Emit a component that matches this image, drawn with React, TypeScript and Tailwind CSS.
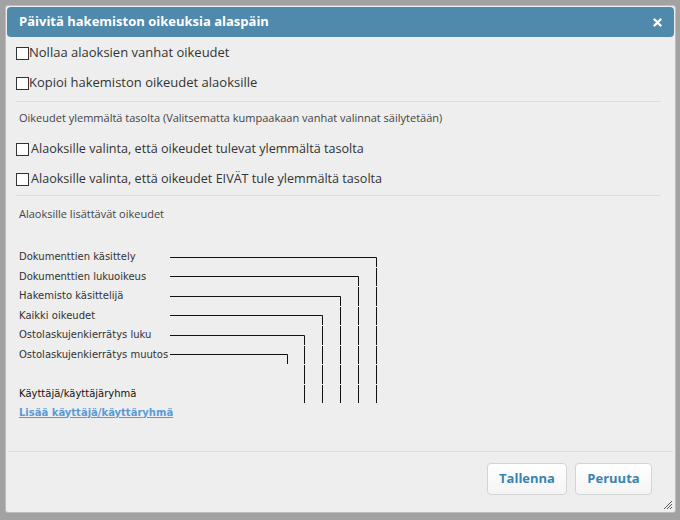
const rows = [
  "Dokumenttien käsittely",
  "Dokumenttien lukuoikeus",
  "Hakemisto käsittelijä",
  "Kaikki oikeudet",
  "Ostolaskujenkierrätys luku",
  "Ostolaskujenkierrätys muutos",
];

const ROW_H = 19.5;
const TOTAL_ROWS = 8;
// where each horizontal line turns down (relative to the svg's left edge)
const ends = [206, 188, 170, 152, 134, 117];

function Checkbox() {
  return (
    <span className="inline-block h-[13px] w-[13px] shrink-0 border border-[#333] bg-white" />
  );
}

function CheckRow({ label, small }: { label: string; small?: boolean }) {
  return (
    <label className={`flex h-[30px] items-center text-[#333] ${small ? "text-[12.6px]" : "text-[13px]"}`}>
      <Checkbox />
      <span className={small ? "ml-[2px]" : ""}>{label}</span>
    </label>
  );
}

function Tree() {
  const segs: JSX.Element[] = [];
  ends.forEach((x, i) => {
    const y = Math.round(i * ROW_H + ROW_H / 2) + 0.5;
    segs.push(<line key={`h${i}`} x1={0} y1={y} x2={x + 0.5} y2={y} stroke="#111" strokeWidth={1} />);
    const last = i === ends.length - 1 ? i : TOTAL_ROWS - 1;
    for (let r = i; r <= last; r++) {
      const top = r === i ? y : Math.round(r * ROW_H) + 1;
      const bottom = Math.round((r + 1) * ROW_H);
      segs.push(
        <line key={`v${i}-${r}`} x1={x + 0.5} y1={top} x2={x + 0.5} y2={bottom} stroke="#111" strokeWidth={1} />
      );
    }
  });
  return (
    <svg width={212} height={ROW_H * TOTAL_ROWS} className="shrink-0">
      {segs}
    </svg>
  );
}

export default function App() {
  return (
    <div
      className="h-[520px] w-[680px] bg-[#a2a2a2] pb-[7px] pl-[5px] pr-[4px] pt-[5px]"
      style={{ fontFamily: '"Open Sans", "Liberation Sans", sans-serif' }}
    >
      <div className="relative flex h-full flex-col rounded-[3px] border border-[#bdbdbd] bg-[#eeeeee] p-[1px]">
        <div className="flex h-[30px] items-center justify-between rounded-[4px] bg-[#4f89ab] pl-[12px] pr-[12px]">
          <span className="text-[13px] font-bold text-white">Päivitä hakemiston oikeuksia alaspäin</span>
          <svg width="9" height="9" viewBox="0 0 9 9">
            <path d="M1.5 1.5 L7.5 7.5 M7.5 1.5 L1.5 7.5" stroke="#fff" strokeWidth="2.4" strokeLinecap="round" />
          </svg>
        </div>

        <div className="flex flex-col pl-[9px] pr-[13px] pt-[1px]">
          <CheckRow label="Nollaa alaoksien vanhat oikeudet" />
          <CheckRow label="Kopioi hakemiston oikeudet alaoksille" />
          <div className="mt-[3px] h-px bg-[#dcdcdc]" />
          <div className="flex h-[32px] items-center pl-[3px] text-[11px] text-[#444]">
            Oikeudet ylemmältä tasolta (Valitsematta kumpaakaan vanhat valinnat säilytetään)
          </div>
          <CheckRow small label="Alaoksille valinta, että oikeudet tulevat ylemmältä tasolta" />
          <CheckRow small label="Alaoksille valinta, että oikeudet EIVÄT tule ylemmältä tasolta" />
          <div className="mt-[1px] h-px bg-[#dcdcdc]" />
          <div className="flex h-[36px] items-center pl-[3px] text-[11px] text-[#444]">
            Alaoksille lisättävät oikeudet
          </div>

          <div
            className="mt-[15px] flex pl-[3px]"
            style={{ fontFamily: '"DejaVu Sans", Verdana, sans-serif' }}
          >
            <div className="flex w-[151px] shrink-0 flex-col text-[10px] text-[#333]">
              {rows.map((r) => (
                <div key={r} className="flex h-[19.5px] items-center whitespace-nowrap">
                  {r}
                </div>
              ))}
              <div className="h-[19.5px]" />
              <div className="flex h-[19.5px] items-center text-[#111]">Käyttäjä/käyttäjäryhmä</div>
            </div>
            <Tree />
          </div>
          <div
            className="flex h-[18px] items-center pl-[3px]"
            style={{ fontFamily: '"DejaVu Sans", Verdana, sans-serif' }}
          >
            <a className="text-[10px] font-bold text-[#5b9bd5] underline">Lisää käyttäjä/käyttäryhmä</a>
          </div>
        </div>

        <div className="mt-auto flex flex-col">
          <div className="mx-[1px] h-px bg-[#dcdcdc]" />
          <div className="flex justify-end gap-[8px] pb-[16px] pr-[22px] pt-[11px]">
            <button className="h-[32px] w-[80px] rounded-[4px] border border-[#d4d4d4] bg-gradient-to-b from-white to-[#f4f4f4] text-[13px] font-bold text-[#3a84b0]">
              Tallenna
            </button>
            <button className="h-[32px] w-[77px] rounded-[4px] border border-[#d4d4d4] bg-gradient-to-b from-white to-[#f4f4f4] text-[13px] font-bold text-[#3a84b0]">
              Peruuta
            </button>
          </div>
        </div>

        <svg className="absolute bottom-[2px] right-[2px]" width="11" height="11" viewBox="0 0 11 11">
          <path d="M10 2 L2 10 M10 5 L5 10 M10 8 L8 10" stroke="#555" strokeWidth="1" />
        </svg>
      </div>
    </div>
  );
}
